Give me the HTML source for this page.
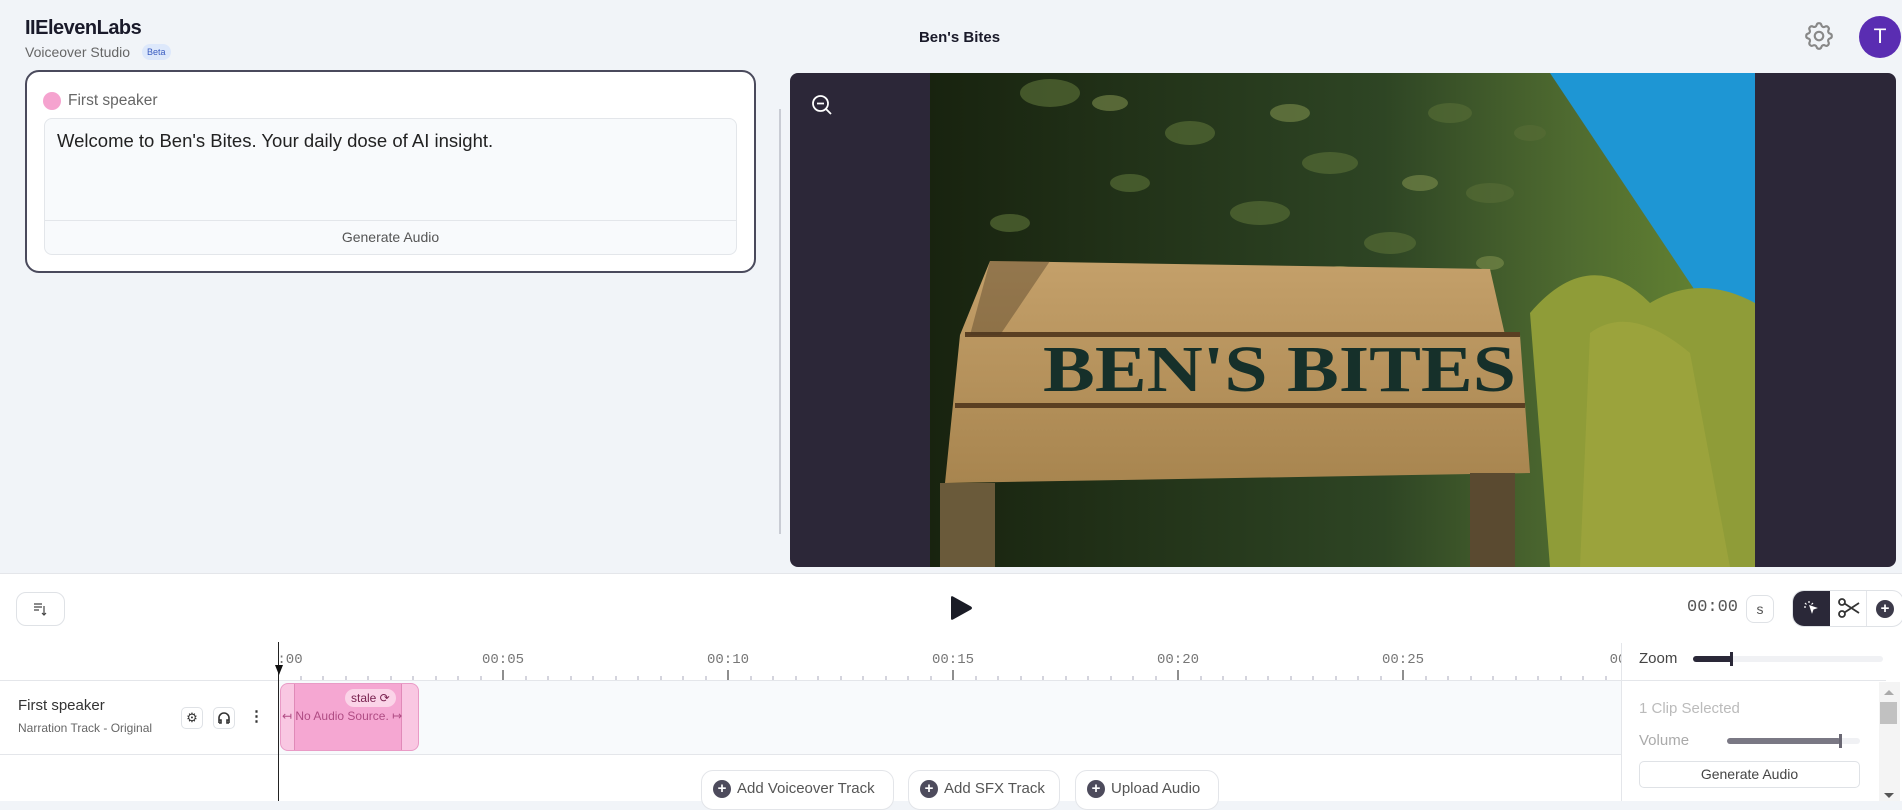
<!DOCTYPE html>
<html><head><meta charset="utf-8"><style>
*{box-sizing:border-box;margin:0;padding:0}
body{width:1902px;height:801px;overflow:hidden;background:#f1f4f8;font-family:"Liberation Sans",sans-serif;position:relative;color:#222}
.a{position:absolute}
.mono{font-family:"Liberation Mono",monospace}
</style></head><body>
<div class="a" style="left:25px;top:17px;font-size:20px;font-weight:bold;color:#1a1a2a;letter-spacing:-0.5px">IIElevenLabs</div>
<div class="a" style="left:25px;top:44px;font-size:14px;color:#666">Voiceover Studio</div>
<div class="a" style="left:142px;top:44px;font-size:9px;color:#3a5cc0;background:#dde8fb;border-radius:8px;padding:3px 5px">Beta</div>
<div class="a" style="left:0;width:1919px;top:29px;text-align:center;font-size:15px;font-weight:bold;color:#1a1a2a;">Ben's Bites</div>
<svg class="a" style="left:1802px;top:19px" width="34" height="34" viewBox="0 0 24 24" fill="none" stroke="#888" stroke-width="1.5"><path d="M10.3 4.3c.4-1.8 3-1.8 3.4 0a1.7 1.7 0 0 0 2.6 1.1c1.5-.9 3.3.8 2.4 2.4a1.7 1.7 0 0 0 1 2.5c1.8.4 1.8 3 0 3.4a1.7 1.7 0 0 0-1 2.6c.9 1.5-.9 3.3-2.4 2.4a1.700 1.7 0 0 0-2.6 1c-.4 1.8-3 1.8-3.4 0a1.7 1.7 0 0 0-2.5-1c-1.6.9-3.300-.9-2.4-2.4a1.7 1.7 0 0 0-1.1-2.6c-1.8-.4-1.8-3 0-3.4a1.7 1.7 0 0 0 1.1-2.5c-.9-1.6.8-3.3 2.4-2.4a1.7 1.7 0 0 0 2.5-1.1z"/><circle cx="12" cy="12" r="3"/></svg>
<div class="a" style="left:1859px;top:16px;width:42px;height:42px;border-radius:50%;background:#5a2db2;color:#fff;font-size:21px;text-align:center;line-height:42px">T</div>

<div class="a" style="left:25px;top:70px;width:731px;height:203px;border:2.5px solid #4a4a5c;border-radius:14px;background:#fff"></div>
<div class="a" style="left:43px;top:92px;width:18px;height:18px;border-radius:50%;background:#f5a3cf"></div>
<div class="a" style="left:68px;top:92px;font-size:15.5px;color:#666">First speaker</div>
<div class="a" style="left:44px;top:118px;width:693px;height:137px;border:1px solid #e3e6ea;border-radius:8px;background:#f8fafc"></div>
<div class="a" style="left:44px;top:220px;width:693px;height:1px;background:#e3e6ea"></div>
<div class="a" style="left:57px;top:130px;font-size:18.5px;color:#222">Welcome to Ben's Bites. Your daily dose of AI insight.</div>
<div class="a" style="left:44px;top:229px;width:693px;text-align:center;font-size:14px;color:#555">Generate Audio</div>
<div class="a" style="left:779px;top:109px;width:1.5px;height:425px;background:#c9ccd4"></div>

<div class="a" style="left:790px;top:73px;width:1106px;height:494px;background:#2c2738;border-radius:8px;overflow:hidden">
<svg class="a" style="left:140px;top:0" width="825" height="494">
<defs><linearGradient id="sky" x1="0" y1="0" x2="1" y2="0"><stop offset="0" stop-color="#18230f"/><stop offset=".55" stop-color="#2e4524"/><stop offset=".78" stop-color="#4f6b30"/><stop offset="1" stop-color="#6a8a32"/></linearGradient>
<linearGradient id="wood" x1="0" y1="0" x2="0" y2="1"><stop offset="0" stop-color="#c4a06a"/><stop offset="1" stop-color="#a8854f"/></linearGradient></defs>
<rect width="825" height="494" fill="url(#sky)"/>
<path d="M620 0 L825 0 L825 260 L780 240 L720 150 L660 60Z" fill="#1e96d4"/>
<path d="M600 240 Q660 170 720 230 Q770 200 825 230 L825 494 L620 494Z" fill="#8f9c38"/>
<path d="M660 260 Q700 230 760 280 L800 494 L650 494Z" fill="#a3a840" opacity=".6"/>
<g fill="#556b35" opacity=".7">
<ellipse cx="120" cy="20" rx="30" ry="14"/><ellipse cx="260" cy="60" rx="25" ry="12"/><ellipse cx="400" cy="90" rx="28" ry="11"/><ellipse cx="520" cy="40" rx="22" ry="10"/><ellipse cx="330" cy="140" rx="30" ry="12"/><ellipse cx="460" cy="170" rx="26" ry="11"/><ellipse cx="200" cy="110" rx="20" ry="9"/><ellipse cx="560" cy="120" rx="24" ry="10"/><ellipse cx="600" cy="60" rx="16" ry="8"/><ellipse cx="80" cy="150" rx="20" ry="9"/></g>
<g fill="#7d8e4c" opacity=".6"><ellipse cx="180" cy="30" rx="18" ry="8"/><ellipse cx="360" cy="40" rx="20" ry="9"/><ellipse cx="490" cy="110" rx="18" ry="8"/><ellipse cx="410" cy="200" rx="16" ry="7"/><ellipse cx="560" cy="190" rx="14" ry="7"/></g>
<path d="M60 188 L560 196 L575 262 L590 262 L600 400 L15 410 L30 262 Z" fill="url(#wood)"/>
<rect x="35" y="259" width="555" height="5" fill="#5a3f22"/>
<rect x="25" y="330" width="570" height="5" fill="#5a3f22"/>
<path d="M60 188 L120 188 L70 262 L40 262Z" fill="#4a3a22" opacity=".4"/>
<rect x="10" y="410" width="55" height="84" fill="#6a5a3a"/>
<rect x="540" y="400" width="45" height="94" fill="#5a4a30"/>
<text x="113" y="318" textLength="473" lengthAdjust="spacingAndGlyphs" font-family="Liberation Serif,serif" font-weight="bold" font-size="66" fill="#16302a">BEN'S BITES</text>
</svg>
<svg class="a" style="left:20px;top:20px" width="24" height="24" viewBox="0 0 24 24" fill="none" stroke="#fff" stroke-width="1.8"><circle cx="10.5" cy="10.5" r="7.5"/><path d="M7 10.5h7M16 16l5 5"/></svg>
</div>

<div class="a" style="left:0;top:573px;width:1902px;height:228px;background:#fff;border-top:1px solid #e4e6ea"></div>
<div class="a" style="left:16px;top:592px;width:49px;height:34px;border:1px solid #dfe2e6;border-radius:10px;background:#fff"></div>
<svg class="a" style="left:32px;top:601px" width="16" height="16" viewBox="0 0 16 16" fill="none" stroke="#444" stroke-width="1.2"><path d="M2 3h8M2 6h8M2 9h5M12 5v9M10 12l2 2 2-2"/></svg>
<svg class="a" style="left:946px;top:594px" width="28" height="28" viewBox="0 0 28 28"><path d="M5 3.5Q5 1.5 7 2.5L25 12.5Q27 14 25 15.5L7 25.5Q5 26.5 5 24.5Z" fill="#1a1c26"/></svg>
<div class="a mono" style="left:1687px;top:598px;font-size:17px;color:#555">00:00</div>
<div class="a" style="left:1746px;top:595px;width:28px;height:28px;border:1px solid #dfe2e6;border-radius:8px;text-align:center;line-height:26px;font-size:14px;color:#555">s</div>
<div class="a" style="left:1792px;top:590px;width:112px;height:37px;border:1px solid #dfe2e6;border-radius:12px;overflow:hidden;background:#fff">
<div class="a" style="left:0;top:0;width:37px;height:37px;background:#2a2838"></div>
<div class="a" style="left:73px;top:0;width:1px;height:37px;background:#e4e6ea"></div>
</div>
<svg class="a" style="left:1801px;top:598px" width="20" height="20" viewBox="0 0 20 20" fill="#fff" stroke="#fff" stroke-width="1.2"><path d="M9 8l6 2-3 1-1 3z"/><path d="M8 3v2M4 5l1.5 1.5M3 9h2M12 5l-1.5 1.5" fill="none"/></svg>
<svg class="a" style="left:1837px;top:597px" width="24" height="22" viewBox="0 0 24 22" fill="none" stroke="#333" stroke-width="1.8"><circle cx="5" cy="5" r="3"/><circle cx="5" cy="17" r="3"/><path d="M7.5 6.5L22 16M7.5 15.5L22 6"/></svg>
<div class="a" style="left:1876px;top:600px;width:18px;height:18px;border-radius:50%;background:#3c3a4a;color:#fff;font-size:15px;line-height:18px;text-align:center;font-weight:bold">+</div>

<div class="a" style="left:0;top:680px;width:1622px;height:1px;background:#e4e6ea"></div>
<div class="a" style="left:279px;top:681px;width:1343px;height:73px;background:#f8fafc"></div>
<div class="a" style="left:0;top:754px;width:1622px;height:1px;background:#e4e6ea"></div>
<div class="a" style="left:278px;top:642px;width:1px;height:159px;background:#222"></div>
<div class="a" style="left:275px;top:665px;width:0;height:0;border-left:4px solid transparent;border-right:4px solid transparent;border-top:10px solid #111"></div>
<svg class="a" style="left:0;top:640px" width="1622" height="41">
<g stroke="#aab" stroke-width="1">
<path d="M301 36v4M323 36v4M346 36v4M368 36v4M391 36v4M413 36v4M436 36v4M458 36v4M481 36v4M526 36v4M548 36v4M571 36v4M593 36v4M616 36v4M638 36v4M661 36v4M683 36v4M706 36v4M751 36v4M773 36v4M796 36v4M818 36v4M841 36v4M863 36v4M886 36v4M908 36v4M931 36v4M976 36v4M998 36v4M1021 36v4M1043 36v4M1066 36v4M1088 36v4M1111 36v4M1133 36v4M1156 36v4M1201 36v4M1223 36v4M1246 36v4M1268 36v4M1291 36v4M1313 36v4M1336 36v4M1358 36v4M1381 36v4M1426 36v4M1448 36v4M1471 36v4M1493 36v4M1516 36v4M1538 36v4M1561 36v4M1583 36v4M1606 36v4"/></g>
<g stroke="#444" stroke-width="1.2"><path d="M503 30v10M728 30v10M953 30v10M1178 30v10M1403 30v10"/></g>
<g font-family="Liberation Mono,monospace" font-size="14" fill="#777" text-anchor="middle">
<text x="290" y="23">:00</text><text x="503" y="23">00:05</text><text x="728" y="23">00:10</text><text x="953" y="23">00:15</text><text x="1178" y="23">00:20</text><text x="1403" y="23">00:25</text><text x="1618" y="23">00</text></g>
</svg>

<div class="a" style="left:18px;top:697px;font-size:15px;color:#333">First speaker</div>
<div class="a" style="left:18px;top:721px;font-size:12px;color:#666">Narration Track - Original</div>
<div class="a" style="left:181px;top:707px;width:22px;height:22px;border:1px solid #dfe2e6;border-radius:5px;background:#fff;text-align:center;line-height:20px;font-size:13px;color:#333">⚙</div>
<div class="a" style="left:213px;top:707px;width:22px;height:22px;border:1px solid #dfe2e6;border-radius:5px;background:#fff"></div>
<svg class="a" style="left:217px;top:711px" width="14" height="14" viewBox="0 0 14 14" fill="none" stroke="#333" stroke-width="1.6"><path d="M2 12V7a5 5 0 0 1 10 0v5M2 9h2v3H2M12 9h-2v3h2"/></svg>
<div class="a" style="left:249px;top:707px;font-size:15px;color:#333;font-weight:bold">⋮</div>

<div class="a" style="left:280px;top:683px;width:139px;height:68px;background:#f9c7e2;border:1px solid #e99bc6;border-radius:8px"></div>
<div class="a" style="left:294px;top:684px;width:108px;height:66px;background:#f5a7d2;border-left:1px solid #e08ab8;border-right:1px solid #e08ab8"></div>
<div class="a" style="left:345px;top:689px;background:#fbd4e8;border-radius:9px;padding:2px 6px;font-size:12px;color:#7a2250">stale ⟳</div>
<div class="a" style="left:282px;top:709px;font-size:12px;color:#b04c84;white-space:nowrap">↤ No Audio Source. ↦</div>

<div class="a" style="left:701px;top:770px;width:193px;height:40px;border:1px solid #e3e5e9;border-radius:12px;background:#fff"></div>
<div class="a" style="left:908px;top:770px;width:152px;height:40px;border:1px solid #e3e5e9;border-radius:12px;background:#fff"></div>
<div class="a" style="left:1075px;top:770px;width:144px;height:40px;border:1px solid #e3e5e9;border-radius:12px;background:#fff"></div>
<div class="a" style="left:713px;top:780px;font-size:15px;color:#555;white-space:nowrap"><span style="display:inline-block;width:18px;height:18px;border-radius:50%;background:#4d4b5c;color:#fff;text-align:center;line-height:18px;font-weight:bold;margin-right:6px">+</span>Add Voiceover Track</div>
<div class="a" style="left:920px;top:780px;font-size:15px;color:#555;white-space:nowrap"><span style="display:inline-block;width:18px;height:18px;border-radius:50%;background:#4d4b5c;color:#fff;text-align:center;line-height:18px;font-weight:bold;margin-right:6px">+</span>Add SFX Track</div>
<div class="a" style="left:1087px;top:780px;font-size:15px;color:#555;white-space:nowrap"><span style="display:inline-block;width:18px;height:18px;border-radius:50%;background:#4d4b5c;color:#fff;text-align:center;line-height:18px;font-weight:bold;margin-right:6px">+</span>Upload Audio</div>

<div class="a" style="left:1621px;top:643px;width:281px;height:158px;background:#fff;border-left:1px solid #e4e6ea"></div>
<div class="a" style="left:1621px;top:680px;width:265px;height:1px;background:#e4e6ea"></div>
<div class="a" style="left:1639px;top:650px;font-size:15px;color:#444">Zoom</div>
<div class="a" style="left:1693px;top:656px;width:190px;height:6px;border-radius:3px;background:#f0f1f4"></div>
<div class="a" style="left:1693px;top:656px;width:40px;height:6px;border-radius:3px;background:#2a2838"></div>
<div class="a" style="left:1730px;top:652px;width:3px;height:14px;background:#2a2838"></div>
<div class="a" style="left:1639px;top:700px;font-size:15px;color:#bbb">1 Clip Selected</div>
<div class="a" style="left:1639px;top:732px;font-size:15px;color:#aaa">Volume</div>
<div class="a" style="left:1727px;top:738px;width:133px;height:6px;border-radius:3px;background:#f0f1f4"></div>
<div class="a" style="left:1727px;top:738px;width:114px;height:6px;border-radius:3px;background:#7a7884"></div>
<div class="a" style="left:1839px;top:734px;width:3px;height:14px;background:#6a6874"></div>
<div class="a" style="left:1639px;top:761px;width:221px;height:27px;border:1px solid #dfe2e6;border-radius:5px;text-align:center;line-height:25px;font-size:14px;color:#444">Generate Audio</div>
<div class="a" style="left:1879px;top:682px;width:21px;height:119px;background:#f4f4f4"></div>
<div class="a" style="left:1880px;top:702px;width:17px;height:22px;background:#c1c1c1"></div>
<div class="a" style="left:1884px;top:690px;width:0;height:0;border-left:5px solid transparent;border-right:5px solid transparent;border-bottom:5px solid #aaa"></div>
<div class="a" style="left:1884px;top:793px;width:0;height:0;border-left:5px solid transparent;border-right:5px solid transparent;border-top:5px solid #555"></div>
</body></html>
